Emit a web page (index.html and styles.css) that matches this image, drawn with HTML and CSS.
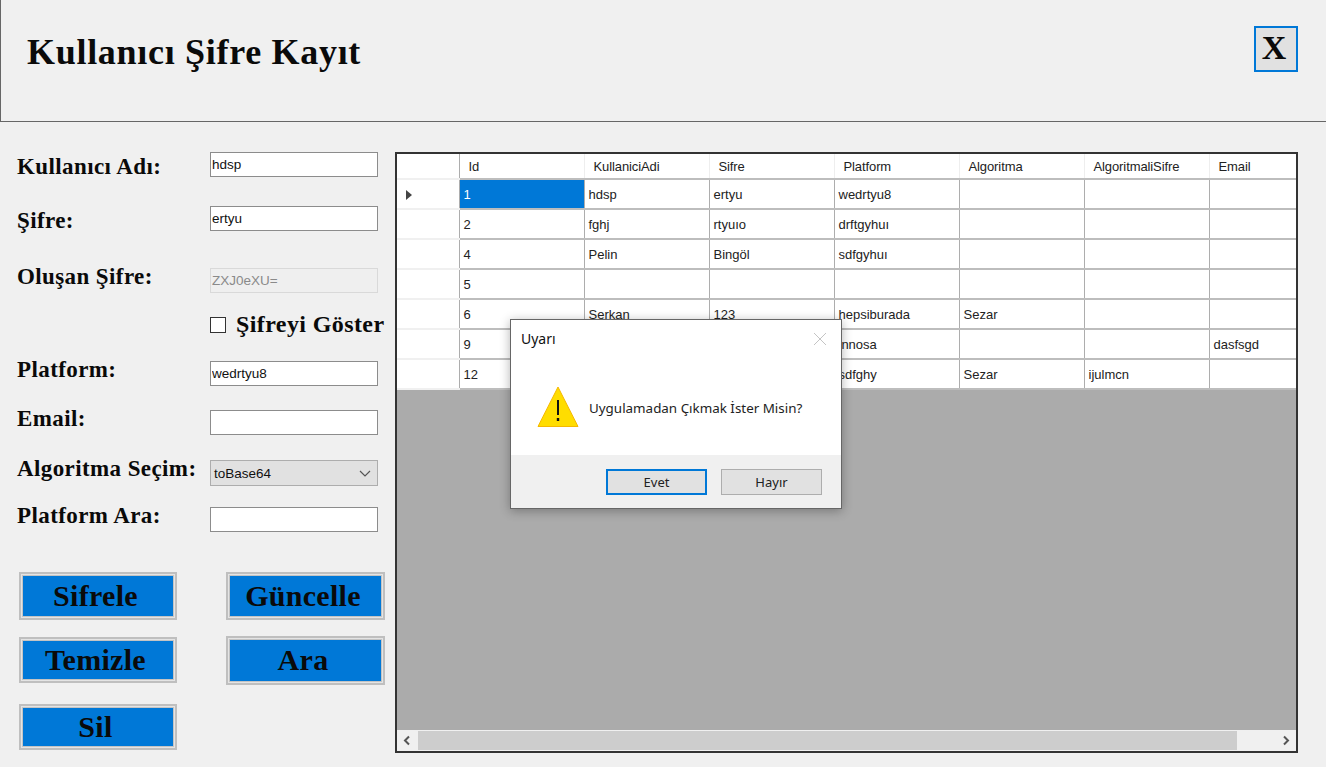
FILE: index.html
```html
<!DOCTYPE html>
<html lang="tr">

<head>
  <meta charset="UTF-8">
  <meta name="viewport" content="width=device-width, initial-scale=1.0">
  <title>Kullanıcı Şifre Kayıt</title>
  <link rel="stylesheet" href="styles.css">
</head>

<body>
  <header class="topbar">
    <h1>Kullanıcı Şifre Kayıt</h1>
    <button class="close-btn">X</button>
  </header>

  <main class="content">
    <section class="side">
      <div class="form">
        <label class="low">Kullanıcı Adı:</label>
        <input type="text" value="hdsp">
        <label class="low">Şifre:</label>
        <input type="text" value="ertyu">
        <label class="high">Oluşan Şifre:</label>
        <input type="text" value="ZXJ0eXU=" disabled>
        <span></span>
        <div class="show-pass"><span class="check"></span>Şifreyi Göster</div>
        <label class="high">Platform:</label>
        <input type="text" value="wedrtyu8">
        <label class="high">Email:</label>
        <input type="text">
        <label class="high">Algoritma Seçim:</label>
        <div class="combo">
          <span>toBase64</span>
          <svg width="12" height="7" viewBox="0 0 12 7"><path d="M1 1l5 5 5-5" fill="none" stroke="#555" stroke-width="1.2"/></svg>
        </div>
        <label class="high">Platform Ara:</label>
        <input type="text">
      </div>

      <div class="actions">
        <button class="action">Sifrele</button>
        <button class="action">Güncelle</button>
        <button class="action short">Temizle</button>
        <button class="action tall">Ara</button>
        <button class="action short">Sil</button>
      </div>
    </section>

    <section class="grid-box">
      <div class="grid-area">
        <table>
          <colgroup>
            <col class="col-head">
            <col class="col-data">
            <col class="col-data">
            <col class="col-data">
            <col class="col-data">
            <col class="col-data">
            <col class="col-data">
            <col>
          </colgroup>
          <thead>
            <tr>
              <th class="row-head"></th>
              <th>Id</th>
              <th>KullaniciAdi</th>
              <th>Sifre</th>
              <th>Platform</th>
              <th>Algoritma</th>
              <th>AlgoritmaliSifre</th>
              <th>Email</th>
            </tr>
          </thead>
          <tbody>
            <tr>
              <td class="row-head"><span class="pointer"></span></td>
              <td class="selected">1</td>
              <td>hdsp</td>
              <td>ertyu</td>
              <td>wedrtyu8</td>
              <td></td>
              <td></td>
              <td></td>
            </tr>
            <tr>
              <td class="row-head"></td>
              <td>2</td>
              <td>fghj</td>
              <td>rtyuıo</td>
              <td>drftgyhuı</td>
              <td></td>
              <td></td>
              <td></td>
            </tr>
            <tr>
              <td class="row-head"></td>
              <td>4</td>
              <td>Pelin</td>
              <td>Bingöl</td>
              <td>sdfgyhuı</td>
              <td></td>
              <td></td>
              <td></td>
            </tr>
            <tr>
              <td class="row-head"></td>
              <td>5</td>
              <td></td>
              <td></td>
              <td></td>
              <td></td>
              <td></td>
              <td></td>
            </tr>
            <tr>
              <td class="row-head"></td>
              <td>6</td>
              <td>Serkan</td>
              <td>123</td>
              <td>hepsiburada</td>
              <td>Sezar</td>
              <td></td>
              <td></td>
            </tr>
            <tr>
              <td class="row-head"></td>
              <td>9</td>
              <td></td>
              <td></td>
              <td>innosa</td>
              <td></td>
              <td></td>
              <td>dasfsgd</td>
            </tr>
            <tr>
              <td class="row-head"></td>
              <td>12</td>
              <td></td>
              <td></td>
              <td>sdfghy</td>
              <td>Sezar</td>
              <td>ijulmcn</td>
              <td></td>
            </tr>
          </tbody>
        </table>
      </div>
      <div class="scrollbar">
        <svg width="21" height="21" viewBox="0 0 21 21"><path d="M12 6.500l-4 4 4 4" fill="none" stroke="#555" stroke-width="2"/></svg>
        <div class="thumb"></div>
        <svg width="21" height="21" viewBox="0 0 21 21"><path d="M9 6.500l4 4-4 4" fill="none" stroke="#555" stroke-width="2"/></svg>
      </div>
    </section>
  </main>

  <!-- mesaj kutusu -->
  <div class="dialog">
    <div class="dialog-title">
      <span>Uyarı</span>
      <svg width="14" height="14" viewBox="0 0 14 14"><path d="M1 1l12 12M13 1L1 13" stroke="#c4c4c4" stroke-width="1"/></svg>
    </div>
    <div class="dialog-body">
      <svg width="42" height="42" viewBox="0 0 42 42">
        <path d="M21 1L41 40.500H1z" fill="#ffdd00" stroke="#f5b800" stroke-width="1"/>
        <path d="M21 14v15" stroke="#111" stroke-width="2"/>
        <path d="M21 32v3" stroke="#111" stroke-width="2.400"/>
      </svg>
      <p>Uygulamadan Çıkmak İster Misin?</p>
    </div>
    <div class="dialog-foot">
      <button class="dlg-btn primary">Evet</button>
      <button class="dlg-btn">Hayır</button>
    </div>
  </div>
</body>

</html>
```

FILE: styles.css
```css
* {
  box-sizing: border-box;
}

html,
body {
  height: 100%;
}

body {
  margin: 0;
  overflow: hidden;
  background-color: #f0f0f0;
  font-family: "Liberation Sans", Arial, sans-serif;
  color: #111;
}

/* ust baslik */
.topbar {
  height: 122px;
  padding: 26px 28px 0 26px;
  display: flex;
  justify-content: space-between;
  align-items: flex-start;
  border-left: 1px solid #666;
  border-bottom: 1px solid #666;
}

h1 {
  margin: 4px 0 0;
  font-family: "Liberation Serif", serif;
  font-size: 36px;
  line-height: 44px;
  font-weight: bold;
  color: #0a0a0a;
  letter-spacing: 0.7px;
}

.close-btn {
  width: 44px;
  height: 46px;
  padding: 0 4px 2px 0;
  border: 2px solid #0078d7;
  background-color: #e1e1e1;
  font-family: "Liberation Serif", serif;
  font-size: 34px;
  line-height: 36px;
  font-weight: bold;
  color: #0a0a0a;
}

.content {
  display: flex;
}

/* sol form */
.side {
  width: 395px;
  padding: 30px 0 0 17px;
}

.form {
  display: grid;
  grid-template-columns: 193px 168px;
  grid-template-rows: 54px 62px 49px 44px 49px 50px 47px 25px;
  align-items: start;
}

label,
.show-pass {
  font-family: "Liberation Serif", serif;
  font-size: 23px;
  font-weight: bold;
  line-height: 25px;
  letter-spacing: 0.4px;
  white-space: nowrap;
  color: #0a0a0a;
}

label.low {
  margin-top: 2px;
}

label.high {
  margin-top: -4px;
}

.form input {
  width: 100%;
  height: 25px;
  padding: 0 1px;
  border: 1px solid #8c8c8c;
  outline: none;
  background-color: #fff;
  font-family: "Liberation Sans", Arial, sans-serif;
  font-size: 13.500px;
  color: #111;
}

.form input:disabled {
  border-color: #d9d9d9;
  background-color: #efefef;
  color: #8a8a8a;
}

.show-pass {
  width: max-content;
  display: flex;
  align-items: center;
  gap: 10px;
  margin-top: -5px;
  font-size: 24px;
}

.check {
  flex-shrink: 0;
  width: 16px;
  height: 16px;
  border: 1px solid #333;
  background-color: #fff;
}

.combo {
  height: 26px;
  padding: 0 6px 0 3px;
  display: flex;
  justify-content: space-between;
  align-items: center;
  border: 1px solid #adadad;
  background-color: #e1e1e1;
  font-size: 13.500px;
}

.actions {
  margin: 40px 0 0 2px;
  display: grid;
  grid-template-columns: 158px 159px;
  grid-template-rows: 48px 50px 46px;
  column-gap: 49px;
  row-gap: 17px;
}

.action {
  padding: 0 5px 1px 0;
  border: 2px solid #bfbfbf;
  box-shadow: inset 0 0 0 1px #e4e4e4, inset 0 0 0 2px #c4c4c4;
  background-color: #0078d7;
  font-family: "Liberation Serif", serif;
  font-size: 30px;
  letter-spacing: 0.3px;
  font-weight: bold;
  color: #0a0a0a;
}

.action.tall {
  height: 49px;
  margin-top: -1px;
}

.action.short {
  height: 46px;
}

/* sag tablo */
.grid-box {
  width: 903px;
  height: 601px;
  margin-top: 30px;
  display: flex;
  flex-direction: column;
  border: 2px solid #333;
  background-color: #ababab;
}

.grid-area {
  flex: 1;
  overflow: hidden;
}

table {
  width: 900px;
  table-layout: fixed;
  border-collapse: collapse;
  background-color: #fff;
  font-size: 13px;
  color: #222;
}

.col-head {
  width: 62px;
}

.col-data {
  width: 125px;
}

th {
  height: 25px;
  padding: 0 0 0 9px;
  text-align: left;
  font-weight: normal;
  letter-spacing: -0.1px;
  border-right: 1px solid #eee;
  border-bottom: 2px solid #bdbdbd;
}

td {
  height: 30px;
  padding: 0 0 0 4px;
  border-right: 1px solid #adadad;
  border-bottom: 2px solid #bdbdbd;
}

.row-head {
  border-right: 1px solid #adadad;
  border-bottom-color: #f0f0f0;
}

td.row-head {
  padding-left: 9px;
}

th:last-child,
td:last-child {
  border-right: none;
}

td.selected {
  background-color: #0078d7;
  color: #fff;
}

.pointer {
  display: block;
  width: 0;
  height: 0;
  margin-top: 2px;
  border-left: 6px solid #444;
  border-top: 5px solid transparent;
  border-bottom: 5px solid transparent;
}

.scrollbar {
  height: 21px;
  display: flex;
  align-items: center;
  background-color: #f0f0f0;
}

.thumb {
  flex: 1;
  height: 19px;
  margin-right: 38px;
  background-color: #cdcdcd;
}

/* mesaj kutusu */
.dialog {
  position: absolute;
  left: 510px;
  top: 319px;
  width: 332px;
  height: 190px;
  display: flex;
  flex-direction: column;
  border: 1px solid #666;
  background-color: #fff;
  box-shadow: 0 2px 10px rgba(0, 0, 0, 0.3);
  font-family: "Noto Sans", sans-serif;
}

.dialog-title {
  height: 38px;
  padding: 0 14px 1px 10px;
  display: flex;
  justify-content: space-between;
  align-items: center;
  font-size: 14px;
  color: #111;
}

.dialog-body {
  flex: 1;
  padding: 0 0 0 26px;
  display: flex;
  align-items: center;
  gap: 10px;
}

.dialog-body p {
  margin: 3px 0 0;
  font-size: 13.400px;
  color: #222;
}

.dialog-foot {
  height: 53px;
  padding: 14px 19px 0 0;
  display: flex;
  justify-content: flex-end;
  gap: 14px;
  background-color: #f0f0f0;
}

.dlg-btn {
  width: 101px;
  height: 26px;
  padding: 0;
  border: 1px solid #adadad;
  background-color: #e1e1e1;
  font-family: "Noto Sans", sans-serif;
  font-size: 13px;
  color: #222;
}

.dlg-btn.primary {
  border: 2px solid #0078d7;
}
```
